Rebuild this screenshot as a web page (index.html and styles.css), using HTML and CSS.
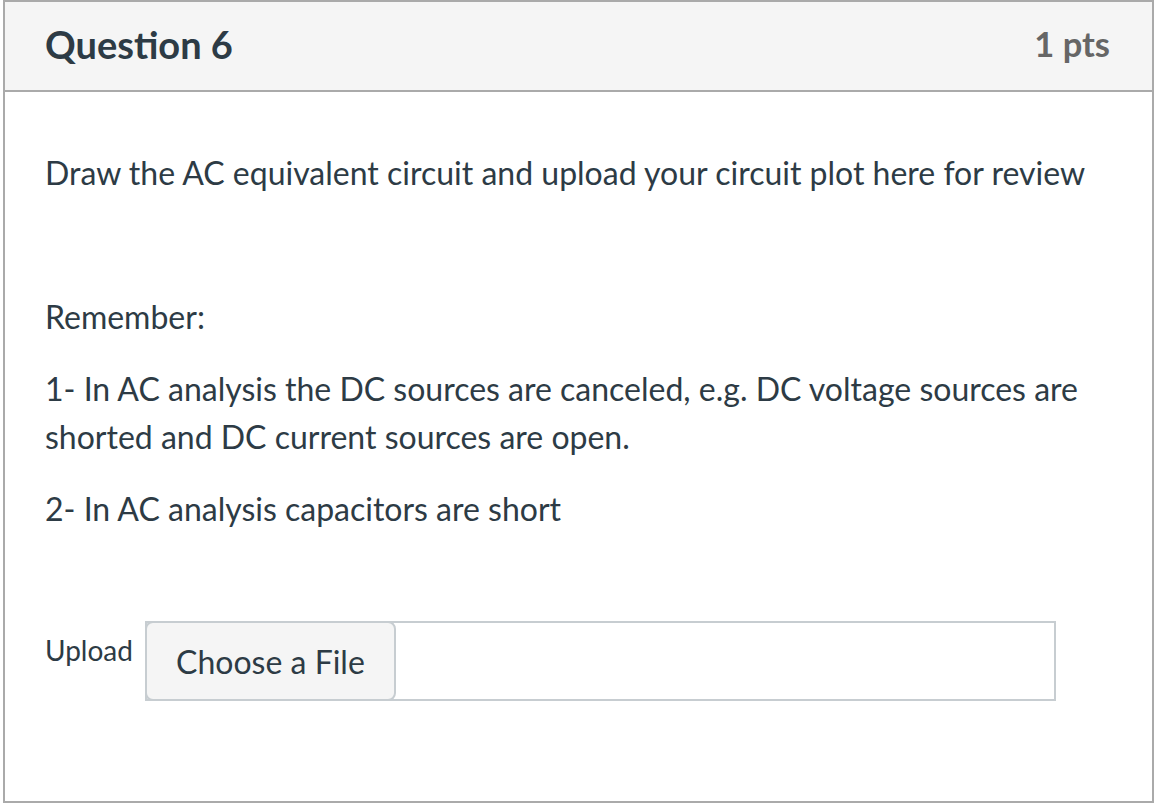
FILE: index.html
```html
<!DOCTYPE html>
<html lang="en">
<head>
  <meta charset="UTF-8" />
  <title>Question 6</title>
  <link rel="stylesheet" href="styles.css">
</head>
<body>
  <div class="question">
    <div class="question-header">
      <h2 class="question-name">Question 6</h2>
      <span class="question-points">1 pts</span>
    </div>

    <div class="question-text">
      <p>Draw the AC equivalent circuit and upload your circuit plot here for review</p>
      <p class="spacer">&nbsp;</p>
      <p>Remember:</p>
      <p>1- In AC analysis the DC sources are canceled, e.g. DC voltage sources are shorted and DC current sources are open.</p>
      <p>2- In AC analysis capacitors are short</p>
    </div>

    <div class="upload-row">
      <label class="upload-label" for="fileInput">Upload</label>
      <div class="file-box">
        <button class="file-button" id="fileInput">Choose a File</button>
      </div>
    </div>
  </div>
</body>
</html>
```

FILE: styles.css
```css
body {
  margin: 0;
  font-family: Lato, "Noto Sans", sans-serif;
  color: #2d3b45;
  background: #fff;
}

.question {
  width: 1151px;
  height: 803px;
  box-sizing: border-box;
  margin-left: 3px;
  border: 2px solid #aaaaaa;
}

.question-header {
  display: flex;
  justify-content: space-between;
  align-items: center;
  height: 83px;
  padding: 0 42px 5px 40px;
  background: #f5f5f5;
  border-bottom: 2px solid #aaaaaa;
}

.question-name {
  margin: 0;
  font-size: 38px;
  font-weight: 700;
}

.question-points {
  font-size: 34.5px;
  font-weight: 700;
  color: #666;
}

.question-text {
  padding: 57px 40px 0 40px;
  font-size: 32px;
  line-height: 48px;
}

.question-text p {
  margin: 0 0 24px 0;
}

.upload-row {
  display: flex;
  align-items: flex-start;
  padding: 64px 40px 0 40px;
}

.upload-label {
  font-size: 28px;
  line-height: 34px;
  padding-top: 12px;
  margin-right: 12px;
}

.file-box {
  width: 911px;
  height: 80px;
  box-sizing: border-box;
  border: 2px solid #c7cdd1;
}

.file-button {
  height: 80px;
  width: 251px;
  margin: -2px 0 0 -2px;
  font-family: Lato, "Noto Sans", sans-serif;
  font-size: 32px;
  color: #2d3b45;
  background: #f5f5f5;
  border: 2px solid #c7cdd1;
  border-radius: 8px;
  cursor: pointer;
}
```
